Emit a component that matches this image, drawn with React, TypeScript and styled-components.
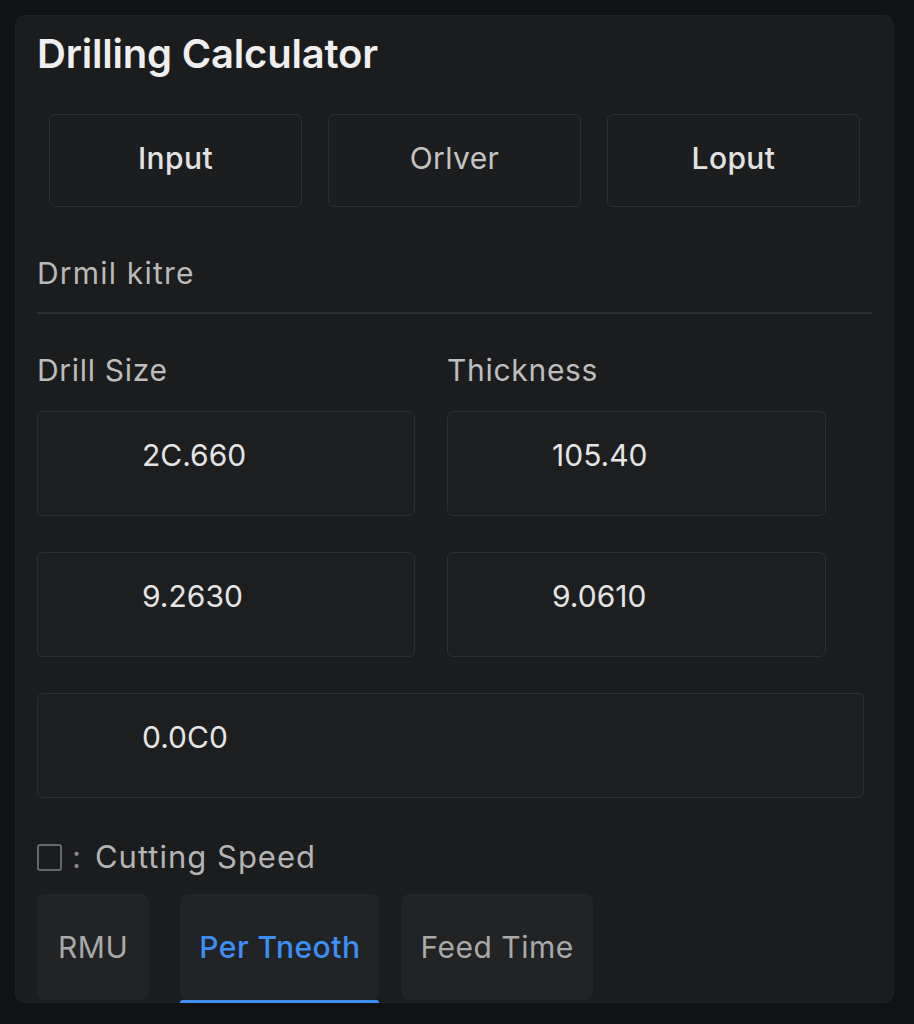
import { useState } from "react";
import styled, { createGlobalStyle } from "styled-components";

const GlobalStyle = createGlobalStyle`
    html, body {
        margin: 0;
        padding: 0;
        background: #111214;
        font-family: Inter, "Noto Sans", "Liberation Sans", sans-serif;
    }
    #root {
        padding: 15px 20px 0 15px;
    }
`;

const modes = ["Input", "Orlver", "Loput"];
const rateTabs = ["RMU", "Per Tneoth", "Feed Time"];

const App = () => {
    const [mode, setMode] = useState(0);
    const [rate, setRate] = useState(1);
    const [cutting, setCutting] = useState(false);

    return (
        <>
            <GlobalStyle />
            <Panel>
                <Title>Drilling Calculator</Title>

                <ModeRow>
                    {modes.map((m, i) => (
                        <ModeButton key={m} dim={i === 1} onClick={() => setMode(i)} data-active={mode === i}>
                            {m}
                        </ModeButton>
                    ))}
                </ModeRow>

                <SectionTitle>Drmil kitre</SectionTitle>
                <Divider />

                <FieldGrid>
                    <FieldLabel>Drill Size</FieldLabel>
                    <FieldLabel>Thickness</FieldLabel>
                    <ValueBox>2C.660</ValueBox>
                    <ValueBox>105.40</ValueBox>
                    <ValueBox>9.2630</ValueBox>
                    <ValueBox>9.0610</ValueBox>
                    <ValueBox wide>0.0C0</ValueBox>
                </FieldGrid>

                <CheckRow onClick={() => setCutting(!cutting)}>
                    <CheckBox checked={cutting} />
                    <Colon>:</Colon>
                    <span>Cutting Speed</span>
                </CheckRow>

                <RateRow>
                    {rateTabs.map((t, i) => (
                        <RateTab key={t} active={rate === i} onClick={() => setRate(i)}>
                            {t}
                        </RateTab>
                    ))}
                </RateRow>
            </Panel>
        </>
    );
};

export default App;

const Panel = styled.div`
    background: #1b1c1e;
    border-radius: 10px;
    border: 1px solid #202124;
    padding: 14px 21px 2px 21px;
    width: 879px;
    box-sizing: border-box;
`;

const Title = styled.h1`
    margin: 0;
    font-size: 40px;
    line-height: 48px;
    font-weight: 600;
    color: #efefef;
    letter-spacing: -0.2px;
`;

const ModeRow = styled.div`
    display: grid;
    grid-template-columns: 1fr 1fr 1fr;
    gap: 26px;
    margin: 36px 12px 0 12px;
`;

const ModeButton = styled.button<{ dim: boolean }>`
    height: 93px;
    padding: 0 0 5px 0;
    background: #1c1d1f;
    border: 1.5px solid #2c2e32;
    border-radius: 6px;
    font-family: inherit;
    font-size: 30px;
    font-weight: ${props => props.dim ? 400 : 500};
    letter-spacing: 0.4px;
    color: ${props => props.dim ? "#c4c4c4" : "#e2e2e2"};
    cursor: pointer;
`;

const SectionTitle = styled.div`
    margin-top: 49px;
    font-size: 30px;
    line-height: 34px;
    color: #b9b9b9;
    letter-spacing: 1.2px;
`;

const Divider = styled.div`
    height: 2px;
    background: #2c2e31;
    margin-top: 22px;
`;

const FieldGrid = styled.div`
    display: grid;
    grid-template-columns: 378px 379px;
    column-gap: 32px;
    row-gap: 36px;
    margin-top: 39px;
`;

const FieldLabel = styled.div`
    font-size: 30px;
    line-height: 34px;
    color: #bdbdbd;
    letter-spacing: 0.7px;
    margin-bottom: -12px;
`;

const ValueBox = styled.div<{ wide?: boolean }>`
    grid-column: ${props => props.wide ? "1 / span 2" : "auto"};
    width: ${props => props.wide ? "827px" : "auto"};
    height: 105px;
    box-sizing: border-box;
    padding: 26px 0 0 104px;
    background: #1d1e20;
    border: 1.5px solid #2c2e32;
    border-radius: 6px;
    font-size: 30px;
    line-height: 34px;
    color: #e4e4e4;
`;

const CheckRow = styled.div`
    display: flex;
    align-items: center;
    margin-top: 42px;
    font-size: 31px;
    line-height: 34px;
    color: #b4b4b4;
    letter-spacing: 1px;
    cursor: pointer;
`;

const CheckBox = styled.span<{ checked: boolean }>`
    width: 21px;
    height: 23px;
    border: 2px solid #666769;
    border-radius: 3px;
    background: ${props => props.checked ? "#3d8ef0" : "transparent"};
`;

const Colon = styled.span`
    margin: 0 13px 0 10px;
    color: #8a8a8a;
`;

const RateRow = styled.div`
    display: flex;
    gap: 22px;
    margin-top: 20px;
`;

const RateTab = styled.div<{ active: boolean }>`
    position: relative;
    height: 106px;
    padding: 0 19px;
    display: flex;
    align-items: center;
    background: #222325;
    border-radius: 8px;
    font-size: 30px;
    font-weight: ${props => props.active ? 500 : 400};
    letter-spacing: 0.5px;
    color: ${props => props.active ? "#3d8ef5" : "#a9a9a9"};
    cursor: pointer;

    &:first-child {
        margin-right: 9px;
        padding: 0 21px;
    }

    &::after {
        content: "";
        display: ${props => props.active ? "block" : "none"};
        position: absolute;
        left: 0;
        right: 0;
        bottom: -5px;
        height: 5px;
        border-radius: 3px;
        background: #3d8ef5;
    }
`;
